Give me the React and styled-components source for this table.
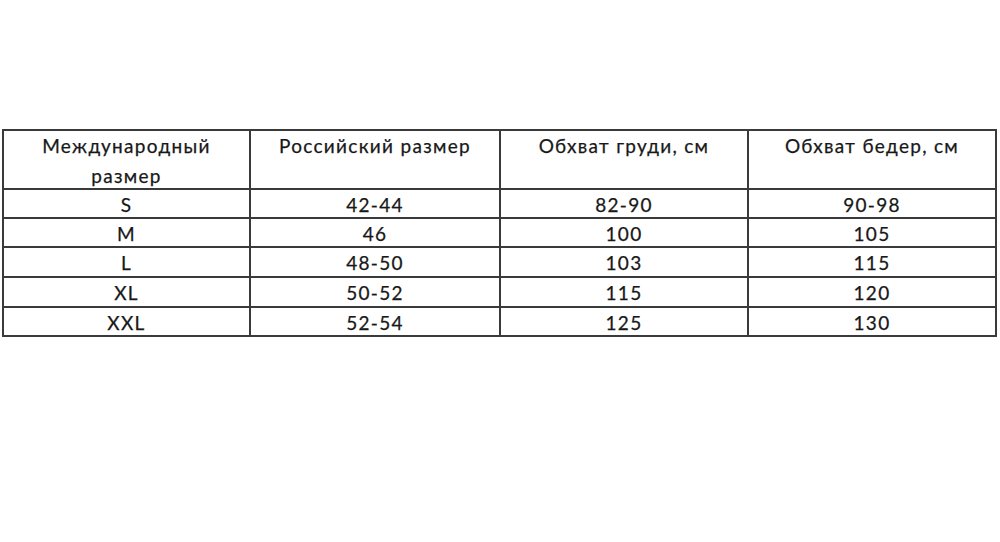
import React from "react";
import styled, { createGlobalStyle } from "styled-components";

const GlobalStyle = createGlobalStyle`
  html, body { margin: 0; padding: 0; background: #ffffff; }
  body { font-family: "Lato", "Open Sans", sans-serif; color: #181818; }
`;

const Page = styled.div`
  width: 1000px;
  height: 542px;
  box-sizing: border-box;
  padding: 129px 0 0 2px;
  background: #ffffff;
`;

const Table = styled.div`
  display: grid;
  grid-template-columns: 247px 250px 248px 248px;
  grid-template-rows: 59px 29px 29px 30px 30px 29px;
  width: max-content;
  border-top: 2px solid #3a3a3a;
  border-left: 2px solid #3a3a3a;
`;

const Cell = styled.div`
  box-sizing: border-box;
  border-right: 2px solid #3a3a3a;
  border-bottom: 2px solid #3a3a3a;
  display: flex;
  align-items: flex-start;
  justify-content: center;
  text-align: center;
  font-size: 19px;
  line-height: ${(p) => (p.$head ? "29.5px" : "29px")};
  letter-spacing: 1.3px;
  -webkit-text-stroke: 0.25px #181818;
  padding: 0 10px;
  overflow: hidden;
`;

const HeadText = styled.span`
  display: block;
  max-width: ${(p) => (p.$wrap ? "190px" : "none")};
  white-space: ${(p) => (p.$wrap ? "normal" : "nowrap")};
`;

const headers = [
  { t: "Международный размер", wrap: true },
  { t: "Российский размер" },
  { t: "Обхват груди, см" },
  { t: "Обхват бедер, см" },
];

const rows = [
  ["S", "42-44", "82-90", "90-98"],
  ["M", "46", "100", "105"],
  ["L", "48-50", "103", "115"],
  ["XL", "50-52", "115", "120"],
  ["XXL", "52-54", "125", "130"],
];

export default function App() {
  return (
    <Page>
      <GlobalStyle />
      <Table>
        {headers.map((h) => (
          <Cell key={h.t} $head>
            <HeadText $wrap={h.wrap}>{h.t}</HeadText>
          </Cell>
        ))}
        {rows.map((r) =>
          r.map((v, i) => <Cell key={r[0] + i}>{v}</Cell>)
        )}
      </Table>
    </Page>
  );
}
